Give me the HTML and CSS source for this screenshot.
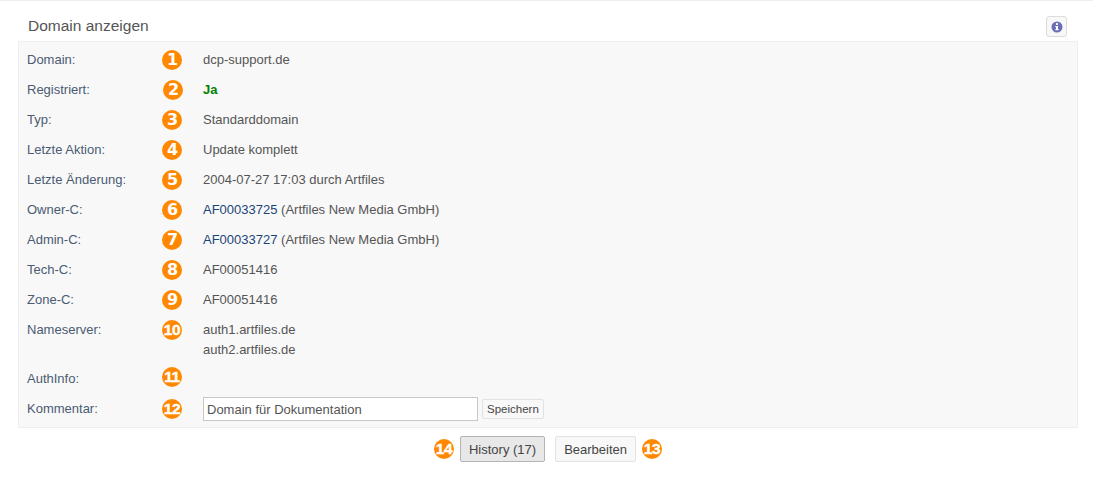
FILE: index.html
```html
<!DOCTYPE html>
<html lang="de">
<head>
<meta charset="utf-8">
<title>Domain anzeigen</title>
<link rel="stylesheet" href="styles.css">
</head>
<body>
<header class="head">
  <h1 class="title">Domain anzeigen</h1>
  <button class="info" type="button" aria-label="Info">
    <svg width="12" height="12" viewBox="0 0 12 12"><circle cx="6" cy="6" r="5.5" fill="#6a6fb5"/><rect x="5" y="2.1" width="2" height="1.9" rx=".5" fill="#fff"/><path d="M4.2 5h2.8v3.2h.8v1.1H4.2V8.2H5V6.1h-.8z" fill="#fff"/></svg>
  </button>
</header>
<main class="panel">
  <div class="row"><div class="label">Domain:</div><span class="badge">1</span><div class="value">dcp-support.de</div></div>
  <div class="row"><div class="label">Registriert:</div><span class="badge nudge">2</span><div class="value yes">Ja</div></div>
  <div class="row"><div class="label">Typ:</div><span class="badge">3</span><div class="value">Standarddomain</div></div>
  <div class="row"><div class="label">Letzte Aktion:</div><span class="badge">4</span><div class="value">Update komplett</div></div>
  <div class="row"><div class="label">Letzte Änderung:</div><span class="badge">5</span><div class="value">2004-07-27 17:03 durch Artfiles</div></div>
  <div class="row"><div class="label">Owner-C:</div><span class="badge">6</span><div class="value"><a class="link" href="#">AF00033725</a> (Artfiles New Media GmbH)</div></div>
  <div class="row"><div class="label">Admin-C:</div><span class="badge">7</span><div class="value"><a class="link" href="#">AF00033727</a> (Artfiles New Media GmbH)</div></div>
  <div class="row"><div class="label">Tech-C:</div><span class="badge">8</span><div class="value">AF00051416</div></div>
  <div class="row"><div class="label">Zone-C:</div><span class="badge">9</span><div class="value">AF00051416</div></div>
  <div class="row tall"><div class="label">Nameserver:</div><span class="badge double">10</span><div class="value">auth1.artfiles.de<br>auth2.artfiles.de</div></div>
  <div class="row short"><div class="label label-up">AuthInfo:</div><span class="badge double badge-up">11</span><div class="value"></div></div>
  <div class="row"><div class="label">Kommentar:</div><span class="badge double">12</span><div class="value form"><input class="field" type="text" value="Domain für Dokumentation"><button class="save" type="button">Speichern</button></div></div>
</main>
<footer class="actions">
  <span class="badge double">14</span>
  <button class="btn active" type="button">History (17)</button>
  <button class="btn" type="button">Bearbeiten</button>
  <span class="badge double">13</span>
</footer>
</body>
</html>
```

FILE: styles.css
```css
* { box-sizing: border-box; }
html, body { margin: 0; padding: 0; }
body {
  width: 1093px;
  height: 480px;
  overflow: hidden;
  background: #fff;
  border-top: 1px solid #eeeeee;
  font-family: "Liberation Sans", Arial, sans-serif;
  font-size: 13px;
  color: #555;
}
.head {
  display: flex;
  justify-content: space-between;
  align-items: flex-start;
  height: 40px;
  padding: 15px 26px 0 28px;
}
.title {
  margin: 0;
  font-size: 15.5px;
  line-height: 20px;
  font-weight: 400;
  color: #555;
}
.info {
  display: flex;
  align-items: center;
  justify-content: center;
  width: 21px;
  height: 21px;
  padding: 0;
  background: #f8f8f8;
  border: 1px solid #dcdcdc;
  border-radius: 3px;
}
.panel {
  width: 1060px;
  height: 387px;
  margin-left: 18px;
  padding-top: 3px;
  background: #f8f8f8;
  border: 1px solid #eeeeee;
}
.row {
  display: flex;
  height: 30px;
  align-items: flex-start;
  line-height: 30px;
}
.row.tall { height: 50px; }
.row.short { height: 29px; }
.label { width: 143px; padding-left: 8px; color: #4a5b73; }
.label-up { line-height: 28px; }
.value { margin-left: 21px; color: #555; line-height: 30px; }
.row.tall .value { line-height: 20px; padding-top: 5px; }
.yes { color: #008000; font-weight: 700; }
.link { color: #1c4478; text-decoration: none; }
.badge {
  flex: none;
  display: flex;
  align-items: center;
  justify-content: center;
  width: 20px;
  height: 20px;
  margin-top: 5px;
  border-radius: 50%;
  background: #ff8800;
  color: #fff;
  font-family: "DejaVu Sans", sans-serif;
  font-size: 16px;
  font-weight: 700;
  line-height: 20px;
  letter-spacing: -1px;
}
.badge.double {
  font-family: "Liberation Sans", Arial, sans-serif;
  font-size: 15.5px;
  letter-spacing: -0.4px;
  -webkit-text-stroke: 0.4px #fff;
}
.badge-up { margin-top: 2px; }
.nudge { position: relative; left: 1px; }
.form { display: flex; align-items: center; height: 30px; }
.field {
  width: 275px;
  height: 24px;
  padding: 0 3px;
  background: #fff;
  border: 1px solid #c8c8c8;
  font: 13px "Liberation Sans", Arial, sans-serif;
  color: #555;
}
.save {
  height: 20px;
  margin-left: 4px;
  padding: 0 4px;
  background: #f8f8f8;
  border: 1px solid #e2e2e2;
  border-radius: 2px;
  font: 11.5px "Liberation Sans", Arial, sans-serif;
  color: #444;
}
.actions {
  display: flex;
  justify-content: center;
  align-items: center;
  height: 26px;
  margin-top: 8px;
  padding-left: 3px;
}
.actions .badge { margin-top: 0; }
.btn {
  height: 26px;
  padding: 0 8px;
  background: #f8f8f8;
  border: 1px solid #e2e2e2;
  border-radius: 2px;
  font: 13px "Liberation Sans", Arial, sans-serif;
  color: #444;
  margin-right: 6px;
}
.btn.active {
  margin-left: 6px;
  margin-right: 10px;
  background: #e8e8e8;
  border-color: #b4b4b4;
}
```
